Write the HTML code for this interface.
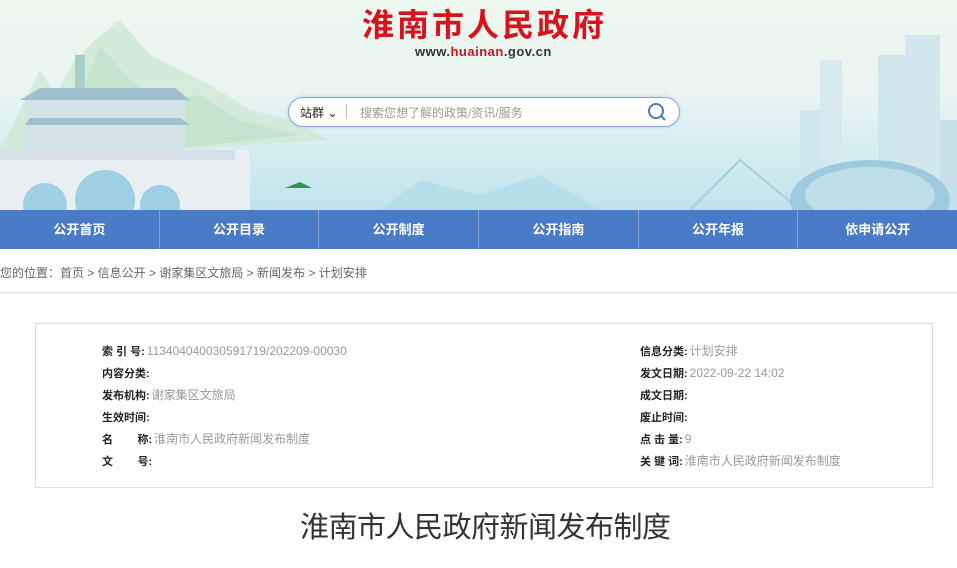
<!DOCTYPE html>
<html><head><meta charset="utf-8"><style>
*{margin:0;padding:0;box-sizing:border-box}
body{width:957px;height:568px;overflow:hidden;background:#fff;font-family:"Liberation Sans","Noto Sans CJK SC",sans-serif;position:relative}
.banner{position:absolute;left:0;top:0;width:957px;height:210px;overflow:hidden;background:linear-gradient(180deg,#eef7ef 0%,#e8f5f2 45%,#d3ecf1 75%,#c0e2ec 100%)}
.abs{position:absolute}
.nav{position:absolute;left:0;top:210px;width:957px;height:39px;background:#4a7bc8;display:flex}
.nav div{flex:1;text-align:center;color:#fff;font-weight:bold;font-size:13px;line-height:39px;border-left:1px solid #7fa1d8}
.nav div:first-child{border-left:none}
.crumb{position:absolute;left:0;top:264px;font-size:12px;color:#666}
.line{position:absolute;left:0;top:292px;width:957px;height:1px;background:#ddd}
.box{position:absolute;left:35px;top:323px;width:898px;height:165px;border:1px solid #ddd}
.row{position:absolute;font-size:12px;line-height:14px;white-space:nowrap}
.row b{color:#222;font-size:11px}
.row span{color:#999;margin-left:2px}
.title{position:absolute;left:300px;top:510px;font-size:29px;color:#333;line-height:36px;white-space:nowrap;letter-spacing:-0.5px}
</style></head><body>
<div class="banner">
<svg class="abs" style="left:0;top:0" width="957" height="210">
<path d="M0 150 L20 110 L40 70 L55 95 L75 60 L95 40 L120 20 L150 55 L180 70 L210 85 L250 110 L290 120 L330 140 L0 160Z" fill="#cfe9d4" opacity=".8"/>
<path d="M60 150 L100 45 L130 80 L160 100 L200 95 L240 120 L300 135 L60 160Z" fill="#bde2c6" opacity=".7"/>
<rect x="75" y="55" width="10" height="35" fill="#a9cdc8"/>
<rect x="0" y="150" width="250" height="60" fill="#e9eef3"/>
<rect x="25" y="95" width="160" height="60" fill="#d3e3e8"/>
<path d="M20 100 L40 88 L175 88 L190 100Z" fill="#9fc1cf"/>
<path d="M25 125 L30 118 L180 118 L190 125Z" fill="#9fc1cf"/>
<rect x="0" y="150" width="235" height="10" fill="#d7e0e8"/>
<circle cx="45" cy="205" r="22" fill="#9dd0e3"/>
<circle cx="105" cy="200" r="30" fill="#9dd0e3"/>
<circle cx="160" cy="205" r="20" fill="#9dd0e3"/>
<path d="M380 210 L420 180 L480 195 L540 175 L600 210Z" fill="#b3dde7" opacity=".8"/>
<rect x="800" y="110" width="20" height="100" fill="#d0e7ee"/>
<rect x="820" y="60" width="22" height="150" fill="#d5e9ef"/>
<rect x="878" y="55" width="28" height="155" fill="#cfe6ed"/>
<rect x="905" y="35" width="35" height="175" fill="#d2e8ee"/>
<rect x="940" y="120" width="17" height="90" fill="#c6e0e9"/>
<path d="M690 210 L740 160 L800 210" stroke="#a8cfdc" stroke-width="2" fill="none"/>
<ellipse cx="870" cy="200" rx="80" ry="40" fill="#9ccbe0"/>
<ellipse cx="870" cy="195" rx="65" ry="28" fill="#bedeea"/>
<path d="M285 188 L300 182 L312 188Z" fill="#3b8a58"/>
</svg>
<div class="abs" style="left:362px;top:6px;font-size:32px;font-weight:bold;color:#d9121c;letter-spacing:3px;line-height:38px;white-space:nowrap">淮南市人民政府</div>
<div class="abs" style="left:415px;top:44px;font-size:13px;font-weight:bold;color:#333;letter-spacing:.5px">www.<span style="color:#c9151e">huainan</span>.gov.cn</div>
<div class="abs" style="left:288px;top:97px;width:392px;height:30px;border:1px solid #8aa6dc;border-radius:15px;background:#fff;box-shadow:0 0 3px #b8c9ea"></div>
<div class="abs" style="left:300px;top:104px;font-size:12px;color:#222">站群 ⌄</div>
<div class="abs" style="left:346px;top:104px;width:1px;height:15px;background:#bbb"></div>
<div class="abs" style="left:360px;top:104px;font-size:12px;color:#999">搜索您想了解的政策/资讯/服务</div>
<svg class="abs" style="left:646px;top:101px" width="22" height="22"><circle cx="10" cy="10" r="7" stroke="#4a78c4" stroke-width="2" fill="none"/><path d="M15 15 L19 19" stroke="#4a78c4" stroke-width="2"/></svg>
</div>
<div class="nav"><div>公开首页</div><div>公开目录</div><div>公开制度</div><div>公开指南</div><div>公开年报</div><div>依申请公开</div></div>
<div class="crumb">您的位置：首页 &gt; 信息公开 &gt; 谢家集区文旅局 &gt; 新闻发布 &gt; 计划安排</div>
<div class="line"></div>
<div class="box"></div>
<div class="row" style="left:102px;top:344px"><b>索 引 号:</b><span>113404040030591719/202209-00030</span></div>
<div class="row" style="left:102px;top:366px"><b>内容分类:</b></div>
<div class="row" style="left:102px;top:388px"><b>发布机构:</b><span>谢家集区文旅局</span></div>
<div class="row" style="left:102px;top:410px"><b>生效时间:</b></div>
<div class="row" style="left:102px;top:432px"><b>名&nbsp;&nbsp;&nbsp;&nbsp;&nbsp;&nbsp;&nbsp;&nbsp;称:</b><span>淮南市人民政府新闻发布制度</span></div>
<div class="row" style="left:102px;top:454px"><b>文&nbsp;&nbsp;&nbsp;&nbsp;&nbsp;&nbsp;&nbsp;&nbsp;号:</b></div>
<div class="row" style="left:640px;top:344px"><b>信息分类:</b><span>计划安排</span></div>
<div class="row" style="left:640px;top:366px"><b>发文日期:</b><span>2022-09-22 14:02</span></div>
<div class="row" style="left:640px;top:388px"><b>成文日期:</b></div>
<div class="row" style="left:640px;top:410px"><b>废止时间:</b></div>
<div class="row" style="left:640px;top:432px"><b>点 击 量:</b><span>9</span></div>
<div class="row" style="left:640px;top:454px"><b>关 键 词:</b><span>淮南市人民政府新闻发布制度</span></div>
<div class="title">淮南市人民政府新闻发布制度</div>
</body></html>
